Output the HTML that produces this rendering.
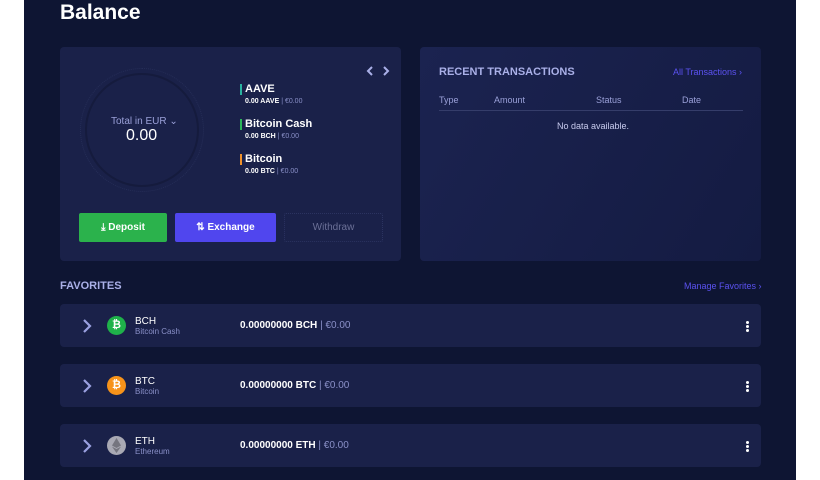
<!DOCTYPE html>
<html><head><style>
*{margin:0;padding:0;box-sizing:border-box}
body{width:820px;height:480px;background:#fff;font-family:"Liberation Sans",sans-serif;position:relative;overflow:hidden}
.main{position:absolute;left:24px;top:0;width:772px;height:480px;background:#0e1533}
.a{position:absolute}
.card{position:absolute;background:#1a2149;border-radius:4px}
.t{position:absolute;white-space:nowrap}
.btn{position:absolute;top:213px;height:29px;border-radius:2px;color:#fff;font-size:10px;font-weight:bold;display:flex;align-items:center;justify-content:center}
.row{position:absolute;left:60px;width:701px;height:43px;background:#1a2149;border-radius:4px}
.dots{position:absolute;left:686px;top:17px;width:3px}
.dots i{display:block;width:3px;height:3px;background:#fff;border-radius:50%;margin-bottom:1px}
.chev{position:absolute;left:22px;top:14px}
</style></head><body>
<div class="main"></div>
<div class="t" style="left:60px;top:1px;font-size:21px;font-weight:bold;color:#fff">Balance</div>

<div class="card" style="left:60px;top:47px;width:341px;height:214px"></div>
<div class="a" style="left:80px;top:68px;width:124px;height:124px;border-radius:50%;border:1px dotted #262e58"></div>
<div class="a" style="left:85px;top:73px;width:114px;height:114px;border-radius:50%;border:2px solid #151b3d"></div>
<div class="t" style="left:111px;top:116px;font-size:10px;color:#9aa0d8">Total in EUR ⌄</div>
<div class="t" style="left:126px;top:127px;font-size:16px;color:#fff">0.00</div>
<svg class="a" style="left:365px;top:65px" width="26" height="12"><path d="M7 2 3 6 7 10M19 2l4 4-4 4" stroke="#aab0e8" stroke-width="2" fill="none"/></svg>

<div class="a" style="left:240px;top:84px;width:2px;height:11px;background:#2ab4a0"></div>
<div class="t" style="left:245px;top:83px;font-size:11px;font-weight:bold;color:#fff">AAVE</div>
<div class="t" style="left:245px;top:98px;font-size:7px;color:#fff;font-weight:bold">0.00 AAVE <span style="color:#8a90c8;font-weight:normal">| €0.00</span></div>
<div class="a" style="left:240px;top:119px;width:2px;height:11px;background:#2bb55a"></div>
<div class="t" style="left:245px;top:118px;font-size:11px;font-weight:bold;color:#fff">Bitcoin Cash</div>
<div class="t" style="left:245px;top:133px;font-size:7px;color:#fff;font-weight:bold">0.00 BCH <span style="color:#8a90c8;font-weight:normal">| €0.00</span></div>
<div class="a" style="left:240px;top:154px;width:2px;height:11px;background:#f0922b"></div>
<div class="t" style="left:245px;top:153px;font-size:11px;font-weight:bold;color:#fff">Bitcoin</div>
<div class="t" style="left:245px;top:168px;font-size:7px;color:#fff;font-weight:bold">0.00 BTC <span style="color:#8a90c8;font-weight:normal">| €0.00</span></div>

<div class="btn" style="left:79px;width:88px;background:#2bb24c">⤓ Deposit</div>
<div class="btn" style="left:175px;width:101px;background:#5046ee">⇅ Exchange</div>
<div class="btn" style="left:284px;width:99px;border:1px dotted #2b3360;color:#6b7097;font-weight:normal">Withdraw</div>

<div class="card" style="left:420px;top:47px;width:341px;height:214px;background:linear-gradient(120deg,#1b2350,#141b42)"></div>
<div class="t" style="left:439px;top:66px;font-size:11px;font-weight:bold;color:#aab0e8">RECENT TRANSACTIONS</div>
<div class="t" style="left:673px;top:67px;font-size:9px;color:#5b52f0">All Transactions ›</div>
<div class="t" style="left:439px;top:95px;font-size:9px;color:#9aa0d8">Type</div>
<div class="t" style="left:494px;top:95px;font-size:9px;color:#9aa0d8">Amount</div>
<div class="t" style="left:596px;top:95px;font-size:9px;color:#9aa0d8">Status</div>
<div class="t" style="left:682px;top:95px;font-size:9px;color:#9aa0d8">Date</div>
<div class="a" style="left:439px;top:110px;width:304px;height:1px;background:#353d6a"></div>
<div class="t" style="left:557px;top:121px;font-size:9px;color:#c8cbee">No data available.</div>

<div class="t" style="left:60px;top:280px;font-size:11px;font-weight:bold;color:#aab0e8">FAVORITES</div>
<div class="t" style="left:684px;top:281px;font-size:9px;color:#5b52f0">Manage Favorites ›</div>

<div class="row" style="top:304px">
 <svg class="chev" width="10" height="16"><path d="M2 2l6 6-6 6" stroke="#9aa0e0" stroke-width="2.2" fill="none"/></svg>
 <div class="a" style="left:47px;top:12px;width:19px;height:19px;border-radius:50%;background:#1fb24a;color:#fff;font-size:11px;font-weight:bold;text-align:center;line-height:19px">₿</div>
 <div class="t" style="left:75px;top:12px;font-size:10px;color:#fff">BCH</div>
 <div class="t" style="left:75px;top:23px;font-size:8px;color:#8a90c8">Bitcoin Cash</div>
 <div class="t" style="left:180px;top:16px;font-size:10px;color:#fff;font-weight:bold">0.00000000 BCH <span style="color:#8a90c8;font-weight:normal">| €0.00</span></div>
 <div class="dots"><i></i><i></i><i></i></div>
</div>
<div class="row" style="top:364px">
 <svg class="chev" width="10" height="16"><path d="M2 2l6 6-6 6" stroke="#9aa0e0" stroke-width="2.2" fill="none"/></svg>
 <div class="a" style="left:47px;top:12px;width:19px;height:19px;border-radius:50%;background:#f7931a;color:#fff;font-size:11px;font-weight:bold;text-align:center;line-height:19px">₿</div>
 <div class="t" style="left:75px;top:12px;font-size:10px;color:#fff">BTC</div>
 <div class="t" style="left:75px;top:23px;font-size:8px;color:#8a90c8">Bitcoin</div>
 <div class="t" style="left:180px;top:16px;font-size:10px;color:#fff;font-weight:bold">0.00000000 BTC <span style="color:#8a90c8;font-weight:normal">| €0.00</span></div>
 <div class="dots"><i></i><i></i><i></i></div>
</div>
<div class="row" style="top:424px">
 <svg class="chev" width="10" height="16"><path d="M2 2l6 6-6 6" stroke="#9aa0e0" stroke-width="2.2" fill="none"/></svg>
 <div class="a" style="left:47px;top:12px;width:19px;height:19px;border-radius:50%;background:#a9a9b4"></div>
 <svg class="a" style="left:52px;top:14px" width="9" height="15"><path d="M4.5 0 0 7.5 4.5 10 9 7.5z M0 8.6 4.5 15 9 8.6 4.5 11z" fill="#75757f"/></svg>
 <div class="t" style="left:75px;top:12px;font-size:10px;color:#fff">ETH</div>
 <div class="t" style="left:75px;top:23px;font-size:8px;color:#8a90c8">Ethereum</div>
 <div class="t" style="left:180px;top:16px;font-size:10px;color:#fff;font-weight:bold">0.00000000 ETH <span style="color:#8a90c8;font-weight:normal">| €0.00</span></div>
 <div class="dots"><i></i><i></i><i></i></div>
</div>
</body></html>
